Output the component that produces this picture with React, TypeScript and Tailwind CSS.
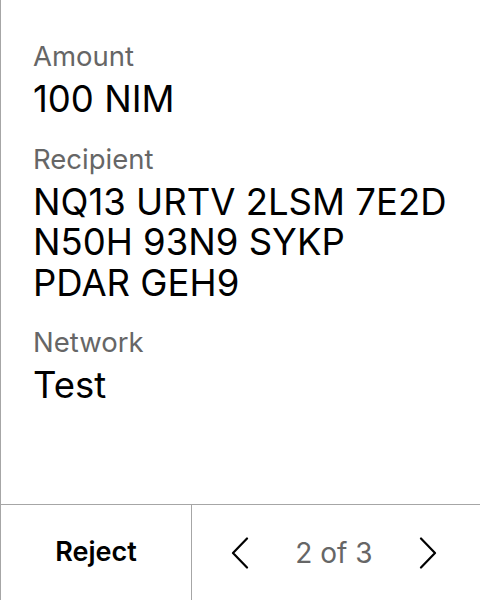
const fields = [
  { label: "Amount", value: ["100 NIM"] },
  { label: "Recipient", value: ["NQ13 URTV 2LSM 7E2D", "N50H 93N9 SYKP", "PDAR GEH9"] },
  { label: "Network", value: ["Test"] },
];

function Chevron({ dir }: { dir: "left" | "right" }) {
  return (
    <svg width="18" height="32" viewBox="0 0 18 32" fill="none" stroke="black" strokeWidth="2.2" strokeLinecap="round" strokeLinejoin="round">
      <path d={dir === "left" ? "M16 1.5 2 16l14 14.5" : "M2 1.5 16 16 2 30.5"} />
    </svg>
  );
}

export default function App() {
  return (
    <div className="flex h-[600px] w-[480px] flex-col border-l border-[#a6a6a6] bg-white font-['Inter',sans-serif]">
      <div className="flex flex-1 flex-col gap-[22px] pl-8 pt-[39px]">
        {fields.map((f) => (
          <div key={f.label}>
            <div className="text-[27.5px] leading-[34px] text-[#666]">{f.label}</div>
            <div className="mt-[6px] text-[36.5px] leading-[40.5px] text-black">
              {f.value.map((v) => (
                <div key={v}>{v}</div>
              ))}
            </div>
          </div>
        ))}
      </div>
      <div className="flex h-[96px] border-t border-[#a6a6a6]">
        <button className="flex w-[191px] items-center justify-center border-r border-[#a6a6a6] text-[27px] font-semibold text-black">
          Reject
        </button>
        <div className="flex flex-1 items-center justify-center gap-[46px] pr-[4px]">
          <Chevron dir="left" />
          <span className="text-[28px] text-[#666]">2 of 3</span>
          <Chevron dir="right" />
        </div>
      </div>
    </div>
  );
}
